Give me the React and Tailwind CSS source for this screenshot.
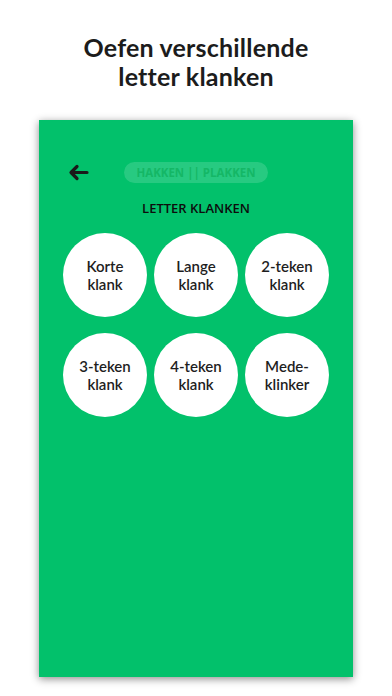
import React from 'react';

const items = [
  ['Korte', 'klank'],
  ['Lange', 'klank'],
  ['2-teken', 'klank'],
  ['3-teken', 'klank'],
  ['4-teken', 'klank'],
  ['Mede-', 'klinker'],
];

export default function App() {
  return (
    <div className="w-[392px] h-[696px] bg-white flex flex-col items-center overflow-hidden" style={{ fontFamily: 'Lato, "Open Sans", sans-serif' }}>
      {/* heading */}
      <h1 className="mt-[33px] text-[25px] leading-[29px] font-bold text-[#1c1c1c] text-center tracking-[0.2px]">
        Oefen verschillende
        <br />
        letter klanken
      </h1>

      {/* green phone screen */}
      <div className="mt-[29px] w-[314px] h-[557px] bg-[#02c16b] shadow-[0_2px_8px_rgba(0,0,0,0.45)] flex flex-col">
        <div className="flex items-center h-[21px] mt-[42px]">
          <svg className="ml-[29px]" width="21" height="17" viewBox="0 0 21 17" fill="none">
            <path d="M19 8.5H3.5 M9 2.5L3 8.5l6 6" stroke="#1a1a1a" strokeWidth="3.2" strokeLinecap="round" strokeLinejoin="round" />
          </svg>
          <div className="ml-[35px] w-[144px] h-[21px] rounded-full bg-white/15 flex items-center justify-center">
            <span className="text-[11.5px] font-bold text-[#14b766]" style={{ fontFamily: '"Open Sans", sans-serif' }}>
              HAKKEN || PLAKKEN
            </span>
          </div>
        </div>

        <div className="mt-[16px] text-center text-[13px] leading-[18px] font-semibold text-[#0d0d0d]" style={{ fontFamily: '"Open Sans", sans-serif' }}>
          LETTER KLANKEN
        </div>

        <div className="mt-[16px] grid grid-cols-[84px_84px_84px] gap-x-[7px] gap-y-[16px] justify-center">
          {items.map(([a, b]) => (
            <div key={a} className="w-[84px] h-[84px] rounded-full bg-white flex flex-col items-center justify-center text-[15px] leading-[18px] font-semibold text-[#1e1e1e]">
              <span>{a}</span>
              <span>{b}</span>
            </div>
          ))}
        </div>
      </div>
    </div>
  );
}
